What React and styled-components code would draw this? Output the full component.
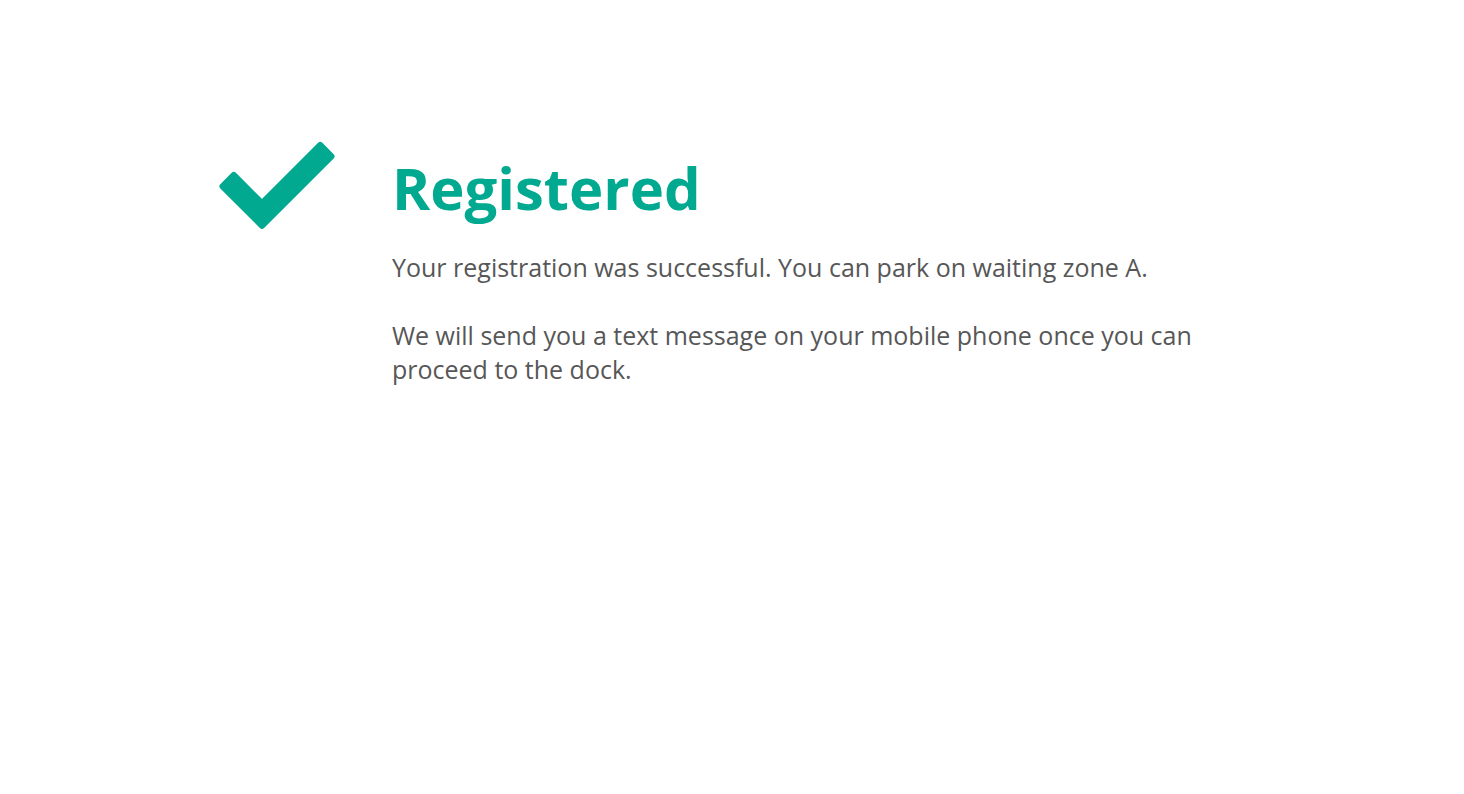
import styled, { createGlobalStyle } from 'styled-components';

const GlobalStyle = createGlobalStyle`
  html, body {
    margin: 0;
    padding: 0;
    background: #fff;
    font-family: "Open Sans", "Noto Sans", sans-serif;
  }
`;

export default function App() {
  return (
    <>
      <GlobalStyle />
      <Page>
        <Row>
          <CheckIcon />
          <Content>
            <Title>Registered</Title>
            <Text>Your registration was successful. You can park on waiting zone A.</Text>
            <Text>
              We will send you a text message on your mobile phone once you can proceed to the dock.
            </Text>
          </Content>
        </Row>
      </Page>
    </>
  );
}

function CheckIcon() {
  return (
    <Icon width="118" height="88" viewBox="0 0 118 88">
      <polygon
        points="44,84.81 4.46,45.28 15.78,33.96 44,62.19 102.22,3.96 113.54,15.28"
        fill="#00a98f"
        stroke="#00a98f"
        strokeWidth="6"
        strokeLinejoin="round"
      />
    </Icon>
  );
}

const Page = styled.main`
  min-height: 100vh;
  padding: 141px 0 0 218px;
  box-sizing: border-box;
`;

const Row = styled.div`
  display: flex;
  align-items: flex-start;
  gap: 56px;
`;

const Icon = styled.svg`
  flex: none;
  overflow: visible;
`;

const Content = styled.section`
  margin-top: 11px;
  width: 820px;
`;

const Title = styled.h1`
  margin: 0 0 26px;
  font-size: 58px;
  line-height: 72px;
  font-weight: 700;
  color: #00a98f;
`;

const Text = styled.p`
  margin: 0 0 34px;
  font-size: 25px;
  line-height: 34px;
  color: #575757;
`;
